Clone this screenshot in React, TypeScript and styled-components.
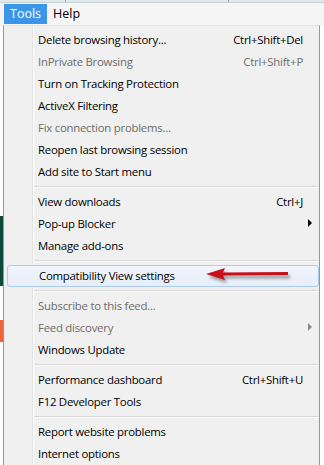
import React from "react";
import styled, { createGlobalStyle } from "styled-components";

const Global = createGlobalStyle`
  html, body { margin: 0; padding: 0; background: #ffffff; }
  #root { width: 324px; height: 465px; overflow: hidden; }
`;

const Page = styled.div`
  width: 324px;
  height: 465px;
  display: flex;
  flex-direction: column;
  font-family: "Open Sans", "Noto Sans", sans-serif;
  font-size: 11.4px;
  letter-spacing: -0.25px;
  color: #000;
  background: #ffffff;
  overflow: hidden;
`;

const TopStrip = styled.div`
  height: 3px;
  flex: none;
  display: flex;
  background: #dfe8ea;
  border-bottom: 1px solid #c9d2d6;
  box-sizing: border-box;
`;

const TopSeg = styled.div<{ $w: number }>`
  width: ${(p) => p.$w}px;
  border-right: 1px solid #9aa5a8;
  flex: none;
`;

const MenuBar = styled.div`
  height: 23px;
  flex: none;
  display: flex;
  align-items: stretch;
  padding: 1px 0 0 4px;
  box-sizing: border-box;
  background: #f5f5f5;
`;

const BarItem = styled.div<{ $active?: boolean }>`
  display: flex;
  align-items: center;
  padding: 0 6px 1px;
  box-sizing: border-box;
  height: 20px;
  background: ${(p) => (p.$active ? "#3d95e8" : "transparent")};
  color: ${(p) => (p.$active ? "#ffffff" : "#000000")};
  font-size: 12.5px;
  letter-spacing: 0;
`;

const Body = styled.div`
  flex: 1;
  display: flex;
  min-height: 0;
`;

const LeftStrip = styled.div`
  width: 3px;
  flex: none;
  display: flex;
  flex-direction: column;
`;

const StripBlock = styled.div<{ $h: number; $c: string }>`
  height: ${(p) => p.$h}px;
  background: ${(p) => p.$c};
  flex: none;
`;

const RightStrip = styled.div`
  width: 4px;
  flex: none;
  display: flex;
  flex-direction: column;
  background: #ffffff;
`;

const Menu = styled.div`
  position: relative;
  flex: 1;
  box-sizing: border-box;
  margin-top: -1px;
  border-left: 1px solid #979797;
  border-right: 1px solid #979797;
  border-top: 1px solid #e4e4e4;
  padding-top: 3px;
  background-color: #f0f0f0;
  background-image: linear-gradient(
    to right,
    transparent 28px,
    #e2e3e3 28px,
    #e2e3e3 29px,
    #ffffff 29px,
    #ffffff 30px,
    transparent 30px
  );
  display: flex;
  flex-direction: column;
`;

const Item = styled.div<{ $disabled?: boolean; $hot?: boolean }>`
  position: relative;
  height: 22px;
  flex: none;
  box-sizing: border-box;
  display: flex;
  align-items: center;
  padding: 0 16px 2px 34px;
  margin: ${(p) => (p.$hot ? "0 0 0 3px" : "0")};
  padding-left: ${(p) => (p.$hot ? "31px" : "34px")};
  color: ${(p) => (p.$disabled ? "#6d6d6d" : "#000000")};
  border: ${(p) => (p.$hot ? "1px solid #aecbf0" : "none")};
  border-radius: 3px;
  background: ${(p) =>
    p.$hot ? "linear-gradient(to bottom, #f1f5fb, #e6eef8)" : "transparent"};
  white-space: nowrap;
`;

const Label = styled.span`
  flex: 1;
`;

const Shortcut = styled.span`
  flex: none;
`;

const SubArrow = styled.span<{ $disabled?: boolean }>`
  position: absolute;
  right: 7px;
  top: 6px;
  width: 0;
  height: 0;
  border-top: 4px solid transparent;
  border-bottom: 4px solid transparent;
  border-left: 4px solid ${(p) => (p.$disabled ? "#8a8a8a" : "#000000")};
`;

const Separator = styled.div`
  height: 8px;
  flex: none;
  display: flex;
  flex-direction: column;
  justify-content: center;
  padding-left: 30px;
`;

const SepLine = styled.div`
  height: 1px;
  background: #d7d7d7;
  border-bottom: 1px solid #ffffff;
`;

const ArrowSvg = styled.svg`
  position: absolute;
  left: 190px;
  top: -4px;
  overflow: visible;
`;

type Entry =
  | { kind: "sep" }
  | {
      kind: "item";
      label: string;
      shortcut?: string;
      disabled?: boolean;
      sub?: boolean;
      hot?: boolean;
    };

const entries: Entry[] = [
  { kind: "item", label: "Delete browsing history...", shortcut: "Ctrl+Shift+Del" },
  { kind: "item", label: "InPrivate Browsing", shortcut: "Ctrl+Shift+P", disabled: true },
  { kind: "item", label: "Turn on Tracking Protection" },
  { kind: "item", label: "ActiveX Filtering" },
  { kind: "item", label: "Fix connection problems...", disabled: true },
  { kind: "item", label: "Reopen last browsing session" },
  { kind: "item", label: "Add site to Start menu" },
  { kind: "sep" },
  { kind: "item", label: "View downloads", shortcut: "Ctrl+J" },
  { kind: "item", label: "Pop-up Blocker", sub: true },
  { kind: "item", label: "Manage add-ons" },
  { kind: "sep" },
  { kind: "item", label: "Compatibility View settings", hot: true },
  { kind: "sep" },
  { kind: "item", label: "Subscribe to this feed...", disabled: true },
  { kind: "item", label: "Feed discovery", disabled: true, sub: true },
  { kind: "item", label: "Windows Update" },
  { kind: "sep" },
  { kind: "item", label: "Performance dashboard", shortcut: "Ctrl+Shift+U" },
  { kind: "item", label: "F12 Developer Tools" },
  { kind: "sep" },
  { kind: "item", label: "Report website problems" },
  { kind: "item", label: "Internet options" },
];

function RedArrow() {
  return (
    <ArrowSvg width="96" height="24" viewBox="0 0 96 24">
      <defs>
        <filter id="sh" x="-20%" y="-50%" width="140%" height="200%">
          <feGaussianBlur stdDeviation="1.6" />
        </filter>
      </defs>
      <g filter="url(#sh)" opacity="0.55" transform="translate(2,3)">
        <path d="M8 12 L27 6 L25 10.5 L90 10 L90 13.5 L25 13.5 L27 18 Z" fill="#555" />
      </g>
      <path d="M8 12 L27 6 L25 10.5 L90 10 L90 13 L25 13.5 L27 18 Z" fill="#c8101a" />
    </ArrowSvg>
  );
}

export default function App() {
  return (
    <Page>
      <Global />
      <TopStrip>
        <TopSeg $w={65} />
        <TopSeg $w={162} />
      </TopStrip>
      <MenuBar>
        <BarItem $active>Tools</BarItem>
        <BarItem>Help</BarItem>
      </MenuBar>
      <Body>
        <LeftStrip>
          <StripBlock $h={190} $c="#ffffff" />
          <StripBlock $h={70} $c="#0d4a3c" />
          <StripBlock $h={34} $c="#ffffff" />
          <StripBlock $h={22} $c="#f0643c" />
          <StripBlock $h={124} $c="#ffffff" />
        </LeftStrip>
        <Menu>
          {entries.map((e, i) =>
            e.kind === "sep" ? (
              <Separator key={i}>
                <SepLine />
              </Separator>
            ) : (
              <Item key={i} $disabled={e.disabled} $hot={e.hot}>
                <Label>{e.label}</Label>
                {e.shortcut && <Shortcut>{e.shortcut}</Shortcut>}
                {e.sub && <SubArrow $disabled={e.disabled} />}
                {e.hot && <RedArrow />}
              </Item>
            )
          )}
        </Menu>
        <RightStrip />
      </Body>
    </Page>
  );
}
